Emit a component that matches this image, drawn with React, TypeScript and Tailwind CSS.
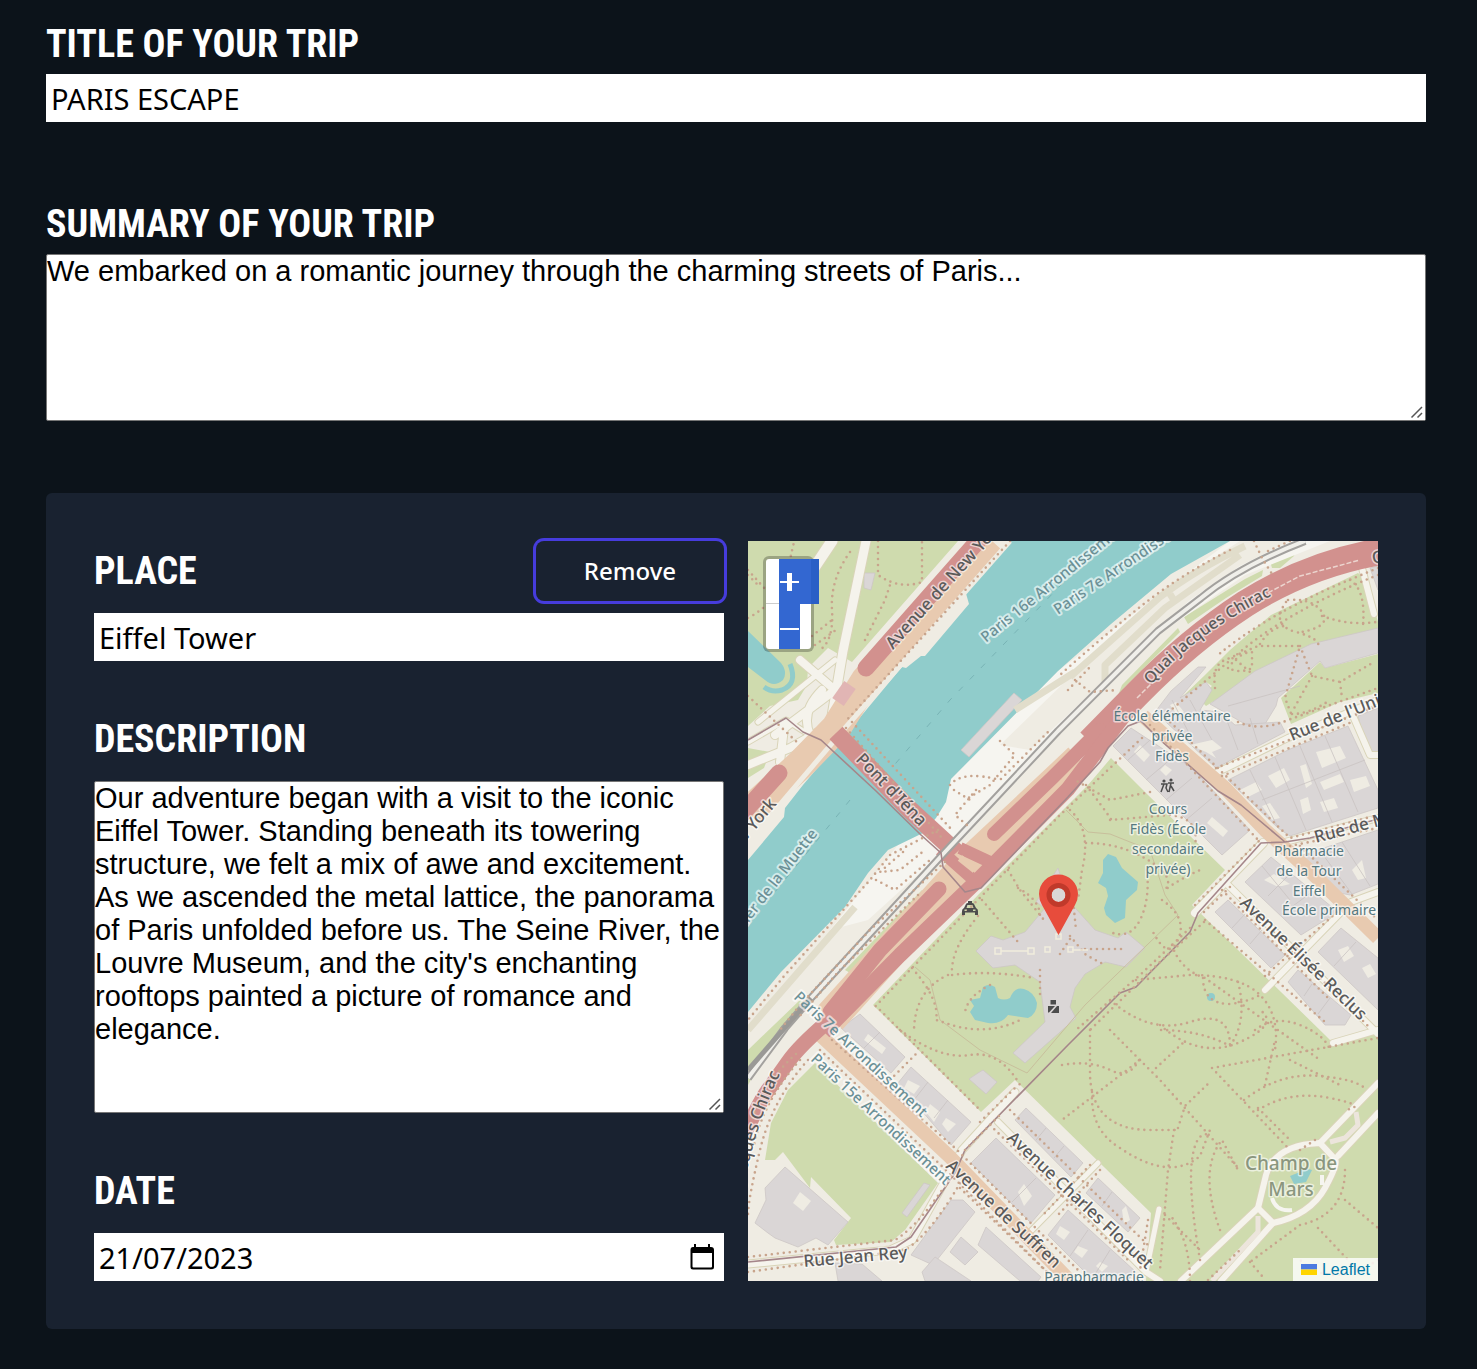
import { useId, useState } from "react";
import type { ReactNode } from "react";

const LABEL = "font-['Roboto_Condensed','Liberation_Sans_Narrow',sans-serif] text-[38px] leading-[60px] font-bold text-white uppercase";
const INPUT = "block h-12 w-full bg-white px-[5px] font-['Noto_Sans',sans-serif] text-[29px] text-black outline-none";
const AREA = "block w-full resize rounded-[2px] border border-[#767676] bg-white font-['Liberation_Sans',Arial,sans-serif] text-[29px] leading-[33px] text-black outline-none";

const greens = [
  "748,541 958,541 852,662 828,648 808,668 807,685 798,700 770,706 748,726",
  "748,748 770,752 764,768 748,778",
  "1088,785 1111,758 1148,795 1225,870 1192,905 1325,1035 1333,1043 1378,1030 1378,1281 1146,1281 1151,1213 1058,1122 1015,1080 981,1112 873,1005 978,895",
  "1181,698 1204,676 1230,650 1271,615 1358,573 1366,580 1378,622 1378,632 1311,648 1255,675 1206,706 1198,698 1212,686 1206,682",
  "1281,698 1320,662 1325,668 1378,654 1378,693 1340,702 1291,724",
  "1115,704 1122,685 1178,628 1180,632 1124,688",
  "1184,617 1245,579 1263,570 1262,576 1226,598 1188,624",
  "1270,561 1290,550 1298,544 1294,556 1280,568 1272,568",
  "845,970 922,890 926,894 852,974",
  "815,1063 938,1183 905,1230 891,1242 836,1245 834,1240 851,1218 811,1177 810,1188 783,1152 775,1160 765,1160 771,1123 788,1090",
  "748,1050 800,1000 808,1004 770,1045 748,1085",
];

const buildings = [
  "976,951 991,936 1003,940 1025,932 1045,908 1036,902 1058,868 1068,900 1095,930 1118,938 1126,932 1145,948 1126,967 1105,962 1085,974 1075,988 1070,1007 1076,1018 1025,1063 1013,1053 1045,1022 1040,982 1015,965 993,968",
  "1210,704 1255,671 1311,644 1378,628 1378,653 1325,668 1320,661 1278,698 1276,706 1265,724 1245,724",
  "1131,728 1113,746 1222,855 1250,830 1192,768",
  "1171,691 1198,667 1206,667 1180,698 1206,682 1212,690 1200,710 1220,712 1235,725 1280,722 1285,732 1216,768 1155,712",
  "1228,780 1290,749 1348,726 1378,790 1378,808 1290,836 1278,828",
  "1358,716 1378,708 1378,752 1368,756",
  "1370,568 1378,566 1378,590",
  "1300,856 1378,830 1378,884 1350,895 1340,893",
  "1245,882 1271,857 1338,912 1301,935",
  "1215,912 1228,900 1285,955 1271,968",
  "1288,982 1298,970 1351,1015 1345,1025 1325,1025",
  "1318,952 1341,928 1378,958 1378,1010",
  "841,1028 860,1014 905,1057 891,1073",
  "911,1067 971,1122 951,1145 898,1083",
  "1026,1108 1083,1163 1071,1177 1015,1120",
  "996,1138 1055,1195 1031,1223 971,1163",
  "1098,1178 1140,1218 1128,1232 1086,1193",
  "1068,1210 1136,1272 1126,1281 1094,1281 1048,1235",
  "951,1200 963,1200 975,1212 933,1265 911,1255",
  "961,1237 978,1252 965,1265 950,1252",
  "935,1257 971,1281 925,1281 922,1272",
  "986,1227 1041,1277 1038,1281 1020,1281 978,1245",
  "835,1263 862,1264 882,1281 838,1281",
  "785,1167 848,1222 828,1245 816,1238 798,1247 775,1238 768,1233 755,1223 766,1200 765,1188",
  "969,1079 978,1073 983,1070 997,1082 986,1094",
  "924,1183 930,1185 907,1217 902,1213",
  "961,750 1014,693 1022,700 969,757",
  "864,573 875,573 871,590 864,588",
];

const courtyards = [
  "800,1192 811,1201 803,1211 793,1203",
  "1170,705 1176,702 1184,712 1178,716", "1190,745 1212,740 1222,748 1212,752 1216,758 1206,752",
  "1140,745 1150,755 1144,762 1134,752", "1165,765 1172,770 1166,776 1160,770", "1212,817 1228,831 1223,837 1207,823",
  "1240,790 1256,782 1262,790 1246,798", "1268,776 1284,768 1290,780 1276,788", "1300,766 1306,764 1312,784 1306,788",
  "1316,752 1340,746 1346,758 1322,768", "1320,782 1340,774 1344,782 1324,790", "1300,800 1308,797 1311,810 1303,814",
  "1320,802 1334,798 1338,808 1324,812", "1350,780 1366,776 1370,786 1354,792", "1262,806 1270,803 1280,818 1272,820",
  "1264,880 1274,874 1290,884 1282,886 1276,886", "1352,870 1362,860 1366,878 1358,880",
  "1338,950 1348,946 1354,956 1344,962", "1362,968 1370,964 1376,974 1368,978",
  "868,1034 886,1048 882,1054 864,1040", "930,1104 940,1112 934,1122 926,1112", "908,1080 920,1086 914,1094 904,1088",
  "1024,1184 1032,1196 1024,1206 1018,1192", "946,1118 956,1124 948,1132 942,1124", "1060,1226 1070,1232 1064,1240 1056,1234",
  "1078,1246 1088,1250 1082,1258 1074,1252", "1122,1210 1126,1206 1130,1220 1124,1224", "1100,1262 1108,1266 1102,1272 1096,1266",
];

const partyWalls =
  "M1150 740L1128 760M1172 758L1146 780M1192 778L1166 800M1212 798L1186 820M1172 700L1190 735M1190 700L1212 740M1226 718L1238 750M1250 718L1258 744M1250 770L1278 828M1275 757L1306 830M1300 746L1332 822M1325 736L1358 812M1262 800L1365 760M1262 866L1290 900M1290 874L1268 896M1312 892L1282 914M1245 914L1232 928M1262 930L1250 944M1312 984L1304 996M1330 998L1318 1014M1318 848L1352 894M1342 842L1370 886M928 1082L914 1100M948 1100L934 1118M1046 1128L1036 1140M1064 1146L1054 1158M1036 1178L1012 1202M1112 1192L1102 1206M1088 1230L1070 1256M1110 1250L1094 1276M1356 942L1334 966M880 1032L864 1048M1228 706L1300 686";

const walkways = [
  "M748 618Q782 600 790 560T800 541", "M878 541V575Q900 590 922 582V541", "M850 552Q830 580 832 610T820 650", "M865 640L885 600L890 585",
  "M812 636L832 620M815 645L836 630", "M748 570L766 590M748 575L758 585", "M748 696L800 745",
  "M1230 550Q1180 575 1140 607T1060 675", "M1010 541L845 722", "M852 722L952 830", "M846 728L942 838",
  "M1378 575Q1290 610 1240 652T1165 715", "M1378 568L1330 588Q1260 620 1218 655",
  "M1268 551L1290 541M1254 541L1262 558L1272 574",
  "M1286 602Q1270 625 1296 632T1318 648M1288 600Q1312 598 1322 612T1302 632M1322 616Q1350 626 1376 622",
  "M1350 580Q1366 590 1363 625M1260 644Q1270 628 1284 626M1215 688Q1212 665 1225 660L1258 646L1300 646L1285 698L1292 716",
  "M1228 668Q1240 652 1252 652V668Q1240 674 1228 668M1236 660L1250 672",
  "M1300 646L1312 676L1340 682L1374 662M1312 676L1292 712M1340 682L1342 698M1292 714Q1310 714 1330 700",
  "M1238 722Q1260 732 1288 720L1378 688", "M1216 768L1378 706", "M1222 776L1352 722",
  "M950 785Q962 770 1000 780Q1030 750 1050 730M954 790L970 800M976 790L955 815L968 826M1000 741L1015 755L990 785L965 800",
  "M1068 690L1092 665M1075 680L1090 692L1118 690",
  "M938 830L890 855L870 880L785 975L748 1020", "M903 852L880 872L900 870L925 850M876 880L895 890L930 860",
  "M945 862L870 930L800 1005L780 1030", "M918 895L840 970L798 1018",
  "M1142 738L1060 815L910 970L872 1010",
  "M1150 792L1110 800L1075 780M1086 785Q1120 830 1110 820L1170 815Q1200 818 1195 845",
  "M1070 810Q1092 830 1082 870L1078 900M1086 843Q1120 843 1148 860T1165 890Q1178 880 1200 870",
  "M1147 870Q1150 900 1140 920T1110 932M1072 890L1076 930",
  "M1162 900Q1188 918 1178 940T1152 930",
  "M1190 928L1140 975L1076 1030", "M1204 922L1160 962L1090 1030",
  "M982 900L1018 942M1008 870L1020 890L1044 920M1018 888Q1040 900 1040 916",
  "M978 916Q950 950 952 975Q990 970 1034 978", "M948 975Q915 990 914 1030M912 968Q940 1000 936 1020L955 1026Q990 1035 1020 1020",
  "M1040 970V1000M990 985Q968 996 965 1012",
  "M1060 954L1072 936M1070 936L1086 955L1105 965M1085 949H1125",
  "M880 1010L980 1110", "M900 1030Q940 1060 970 1055T1020 1085",
  "M1136 980L1190 975Q1240 975 1260 995T1275 1050M1172 945Q1180 970 1205 978L1320 1060",
  "M1203 978Q1203 1004 1230 1004Q1248 1002 1262 994M1238 982Q1248 1020 1230 1046Q1200 1030 1160 1030",
  "M1110 1000Q1150 1035 1190 1022T1230 1046M1255 1030Q1275 1015 1300 1025T1330 1050",
  "M1205 920L1325 1022M1110 1030L1160 1080L1240 1170",
  "M1090 1030V1075Q1092 1130 1150 1130H1178M1062 1065Q1090 1060 1110 1070T1140 1058",
  "M1156 1068L1184 1042M1140 1060L1062 1120M1178 1128L1185 1106L1210 1082",
  "M1092 1092Q1090 1130 1120 1148Q1170 1182 1200 1156L1210 1130",
  "M1174 1130L1168 1170L1160 1270", "M1190 1281Q1190 1240 1170 1215M1220 1230Q1198 1170 1222 1140L1238 1170",
  "M1165 1215L1200 1250M1200 1260Q1188 1190 1192 1160T1210 1135",
  "M1212 1068L1378 1038M1212 1068L1288 1148M1160 1025Q1200 1060 1240 1042T1260 1010",
  "M1244 1100Q1280 1072 1320 1076T1366 1090M1258 1110Q1290 1090 1330 1098T1345 1110",
  "M1265 1085L1275 1040M1290 1060L1340 1085M1258 1108L1290 1140M1300 1150L1315 1140",
  "M1345 1170Q1345 1215 1300 1225L1250 1262M1345 1200L1378 1228M1318 1228L1350 1262M1378 1260Q1330 1290 1300 1260",
  "M1208 1280L1240 1250M1250 1262L1262 1276",
  "M1240 898L1370 1028", "M1222 890L1330 1000", "M1150 725L1260 842", "M1166 718L1290 838L1378 815", "M1300 846L1378 920",
  "M1290 846L1378 828M1195 905L1262 838M1204 912L1232 885M1265 976L1345 905",
  "M820 1050L948 1172L1056 1281", "M832 1040L955 1148L1078 1270",
  "M808 1060Q772 1100 760 1150T748 1215", "M800 1060Q764 1100 754 1145M796 1054Q766 1080 752 1120",
  "M748 1257L895 1240Q920 1225 952 1175", "M748 1272L905 1250Q930 1235 962 1180",
  "M980 1122L1015 1088M965 1150L1000 1115M890 1080L918 1052M1090 1165L1044 1214M1100 1170L1058 1215",
  "M1010 1110L1148 1245M990 1125L1130 1262M1148 1220L1140 1270M960 1188L1050 1275",
];

const minorRoads = [
  { d: "M866 541L843 651L830 728", w: 9 },
  { d: "M832 541L806 580", w: 11 },
  { d: "M748 765L790 748L832 724M800 660L835 690L775 735M822 690Q800 712 810 735M784 728L780 762", w: 8 },
  { d: "M748 742L786 720L805 732M835 660L758 722", w: 5 },
  { d: "M1216 773L1288 738L1378 700", w: 6 },
  { d: "M1353 716L1370 755H1378M1362 568L1374 614", w: 6 },
  { d: "M1285 842L1378 818", w: 6 },
  { d: "M1228 885L1378 1034", w: 6 },
  { d: "M1265 990L1351 902L1378 892", w: 6 },
  { d: "M1333 1043L1378 1030", w: 6 },
  { d: "M1263 843L1195 913", w: 8 },
  { d: "M1015 1092L962 1150L912 1240L890 1250L748 1264", w: 7 },
  { d: "M998 1122L1146 1272L1160 1281", w: 6 },
  { d: "M1098 1163L1030 1232", w: 5 },
  { d: "M1159 1209L1146 1272", w: 5 },
  { d: "M1181 1281L1258 1208L1273 1223L1221 1281", w: 6 },
  { d: "M1273 1223Q1310 1215 1325 1188T1334 1158L1320 1143Q1275 1145 1266 1175L1258 1208", w: 6 },
  { d: "M1320 1143L1378 1083M1338 1156L1378 1113", w: 6 },
];

const roads = [
  { d: "M992 541L866 680L836 728L800 765L748 812", w: 30, c: "#e8cab0" },
  { d: "M978 541L866 668", w: 17, c: "#d2918e", cap: true },
  { d: "M779 773L742 814", w: 17, c: "#d2918e", cap: true },
  { d: "M850 685L838 702", w: 14, c: "#e1b5b4" },
  { d: "M1010 541L845 728L748 842", w: 5, c: "#efece3" },
  { d: "M836 733L908 808L982 876", w: 18, c: "#d2918e" },
  { d: "M1143 716L1171 741L1225 788L1265 830L1311 872L1378 938", w: 14, c: "#e8cab0" },
  { d: "M818 1033L950 1157L1070 1281", w: 14, c: "#e8cab0" },
  { d: "M1080 760L965 868L830 1018", w: 34, c: "#e8cab0" },
  { d: "M1384 551Q1310 563 1245 604Q1190 640 1138 693L1090 742", w: 27, c: "#d2918e" },
  { d: "M1100 730L1052 778L994 834", w: 14, c: "#d2918e", cap: true },
  { d: "M1122 718L1068 789L978 880L900 955L824 1032", w: 15, c: "#d2918e" },
  { d: "M939 889L880 950L830 1012", w: 15, c: "#d2918e", cap: true },
  { d: "M940 850L976 882M960 848L990 862", w: 12, c: "#d2918e" },
  { d: "M832 1018Q800 1045 788 1062T768 1090T744 1135", w: 15, c: "#d2918e" },
];

const streetLabels = [
  { t: "Avenue de New York", x: 893, y: 650, a: -48 },
  { t: "New York", x: 777, y: 804, a: -50, end: true },
  { t: "Pont d'Iéna", x: 855, y: 760, a: 46 },
  { t: "Rue de l'Université", x: 1292, y: 741, a: -22 },
  { t: "Rue de Monttessuy", x: 1316, y: 843, a: -15 },
  { t: "Avenue Élisée Reclus", x: 1239, y: 904, a: 44 },
  { t: "Avenue de Suffren", x: 945, y: 1167, a: 43 },
  { t: "Avenue Charles Floquet", x: 1006, y: 1139, a: 43 },
  { t: "Rue Jean Rey", x: 804, y: 1267, a: -5 },
  { t: "Quai", x: 1373, y: 564, a: -10 },
];

const districtLabels = [
  { t: "Paris 16e Arrondissement", x: 986, y: 643, a: -39 },
  { t: "Paris 7e Arrondissement", x: 1058, y: 615, a: -34 },
  { t: "Quartier de la Muette", x: 818, y: 834, a: -52, end: true },
  { t: "Paris 7e Arrondissement", x: 793, y: 998, a: 43 },
  { t: "Paris 15e Arrondissement", x: 810, y: 1060, a: 43 },
];

const placeLabels = [
  { x: 1172, y: 721, lines: ["École élémentaire", "privée", "Fidès"] },
  { x: 1168, y: 814, lines: ["Cours", "Fidès (École", "secondaire", "privée)"] },
  { x: 1309, y: 856, lines: ["Pharmacie", "de la Tour", "Eiffel"] },
  { x: 1329, y: 915, lines: ["École primaire"] },
  { x: 1094, y: 1282, lines: ["Parapharmacie"] },
];

const RAILWAY = "M1305 541Q1240 566 1201 598L1158 631L1058 731L945 852L811 998L785 1028L748 1078";

function ParisMap() {
  return (
    <svg className="absolute inset-0 h-full w-full" viewBox="748 541 630 740" preserveAspectRatio="xMidYMid slice" role="img" aria-label="Map of the Eiffel Tower area" fontFamily="'Noto Sans', sans-serif">
      <rect x="748" y="541" width="630" height="740" fill="#efece3" />
      <g fill="#cfdbae">{greens.map((p) => <polygon key={p} points={p} />)}</g>

      <polygon fill="#f6f5f0" points="1230,541 1330,541 1245,575 1158,635 1058,735 945,850 868,920 830,930 950,780 1058,671" />
      <polygon fill="#efece3" points="1240,541 1290,541 1240,566 1190,600 1060,722 1030,750 1000,745 1075,672 1160,592" />
      <g fill="#90cccb">
        <path d="M1008 541L965 590L969 604L925 656H921L906 668L902 667L852 727L803 785L785 808L784 817L748 860V1012L781 972L845 907L868 873L888 850L923 833L936 818L946 802L951 779L1058 671L1111 624L1171 574L1230 541Z" />
        <path d="M748 631L781 663Q788 672 783 680Q774 688 765 680L748 667Z" />
        <path d="M1108 854L1116 857L1122 868L1138 882L1137 890L1126 900L1125 918L1115 923L1106 915L1104 908L1108 896L1106 888L1098 883L1103 873V860Z" />
        <path d="M983 987Q989 983 995 987L998 998Q1004 1001 1010 998Q1015 986 1024 989Q1034 992 1037 1003Q1037 1014 1028 1018L1008 1015Q1001 1025 988 1023L975 1020L970 1012L974 1006L970 1000L980 998Z" />
        <circle cx="1211" cy="997" r="4" />
      </g>
      <path d="M790 664Q798 684 782 690Q772 693 764 687" fill="none" stroke="#90cccb" strokeWidth="5" />
      <path d="M1085 560L950 700L890 770M850 800L748 925" stroke="#78b3b5" strokeWidth="1" strokeDasharray="6 10" fill="none" />

      <g fill="#dad6d6" stroke="#cdc7c5" strokeWidth="0.8">{buildings.map((p) => <polygon key={p} points={p} />)}</g>
      <g fill="#efece3">{courtyards.map((p) => <polygon key={p} points={p} />)}</g>
      <path d={partyWalls} stroke="#c9c3c1" strokeWidth="0.8" />

      <g fill="none" strokeLinejoin="round">
        <path d="M1245 546Q1195 570 1160 597L1070 677M1170 594L1175 602M1240 555L1165 608L1105 665V682M855 907L748 1030M1015 710L1075 672" stroke="#e1ddcb" strokeWidth="7" />
        <g stroke="#d9d4b8" strokeLinecap="round">{minorRoads.map((r) => <path key={r.d} d={r.d} strokeWidth={r.w + 2} />)}</g>
        <g stroke="#f5f3ec" strokeLinecap="round">{minorRoads.map((r) => <path key={r.d} d={r.d} strokeWidth={r.w} />)}</g>
        <path d="M1212 1281L1258 1232V1216M1330 1142L1345 1138L1358 1125L1356 1112" stroke="#ece5dc" strokeWidth="5" />
        {roads.map((r) => <path key={r.d} d={r.d} stroke={r.c} strokeWidth={r.w} strokeLinecap={r.cap ? "round" : "butt"} />)}
        <path d="M960 858L975 870" stroke="#e8cab0" strokeWidth="7" />
        <path d="M1137 698L1160 675M1262 596L1300 576L1360 560" stroke="#ecd5cf" strokeWidth="1.5" strokeDasharray="5 2" />
        <path d={RAILWAY} stroke="#a3a19e" strokeWidth="8" />
        <path d={RAILWAY} stroke="#f0efea" strokeWidth="4" />
        <path d="M811 998L748 1070" stroke="#9a9996" strokeWidth="5" />
        <path d="M748 740L786 718L803 732L821 740L876 791L921 835L941 853L943 867L965 892L981 888L1068 797L1100 762L1108 748L1128 726L1141 721L1158 738L1218 791L1241 805L1285 842L1261 843L1198 913L1190 932L1136 987L1120 993L1068 1045L965 1150L955 1173L911 1237L896 1247L748 1262M1285 842L1310 838L1378 819" stroke="#a5868a" strokeWidth="1.6" />
        <path d="M1066 810L1088 832L1110 834L1150 850L1165 895L1178 915L1085 1005L1027 1073L980 1050L940 1020L930 980L915 967" stroke="#c8bf9c" strokeWidth="1" />
        <g stroke="#c8a48c" strokeWidth="2.6" strokeLinecap="round" strokeDasharray="0 6">{walkways.map((d) => <path key={d} d={d} />)}</g>
      </g>

      <g fill="none" stroke="#f1eddd" strokeWidth="1.5">
        <path d="M1001 951H1028M1072 950H1088" />
        <rect x="995" y="948" width="6" height="6" /><rect x="1028" y="948" width="6" height="6" />
        <rect x="1045" y="947" width="5" height="5" /><rect x="1068" y="947" width="5" height="5" /><rect x="1056" y="934" width="5" height="5" />
      </g>
      <path d="M1290 1176L1300 1172L1305 1168L1312 1170L1306 1182L1294 1184Z" fill="#90cccb" />
      <path d="M1272 1198Q1276 1212 1292 1210M1322 1175V1185" stroke="#f6f5f0" strokeWidth="4" fill="none" />

      <g fill="#4c4c4c">
        <path fillRule="evenodd" d="M964 908L966 904Q966.500 903 968 903V901H972V903Q973.500 903 974 904L976 908Q978 909 978 911V915H975V912.500H965V915H962V911Q962 909 964 908ZM967.500 905L966.500 908H973.500L972.500 905ZM964.500 909.500V911H967V909.500ZM973 909.500V911H975.500V909.500Z" />
        <path d="M1050.500 1000H1056V1004.500H1050.500ZM1048 1006H1055L1049 1012.500H1048ZM1057 1006H1059V1013H1051Z" />
        <circle cx="1164" cy="781" r="1.6" /><circle cx="1171" cy="780" r="1.6" />
        <path d="M1161 784H1167L1166 788L1168 792M1164 784L1161 792M1168 783H1174M1171 783L1169 792M1171 786L1174 791" stroke="#4c4c4c" strokeWidth="1.5" fill="none" />
      </g>

      <g paintOrder="stroke" strokeLinejoin="round" stroke="#ffffff" strokeOpacity="0.6" fontWeight="500">
        <g fontSize="17" fill="#5a5a5a" strokeWidth="3">
          {streetLabels.map((l) => (
            <text key={l.t} transform={`translate(${l.x} ${l.y}) rotate(${l.a})`} textAnchor={l.end ? "end" : "start"}>{l.t}</text>
          ))}
          <path id="quai-north" d="M1151 685Q1195 632 1285 589" fill="none" stroke="none" />
          <text fontSize="16"><textPath href="#quai-north">Quai Jacques Chirac</textPath></text>
          <path id="quai-south" d="M736 1232Q748 1140 780 1074" fill="none" stroke="none" />
          <text textAnchor="end"><textPath href="#quai-south" startOffset="100%">Quai Jacques Chirac</textPath></text>
        </g>
        <g fontSize="15" fill="#6b9096" strokeWidth="4">
          {districtLabels.map((l) => (
            <text key={`${l.t}${l.x}`} transform={`translate(${l.x} ${l.y}) rotate(${l.a})`} textAnchor={l.end ? "end" : "start"}>{l.t}</text>
          ))}
        </g>
        <g fontSize="14" fontWeight="400" fill="#567980" strokeWidth="3" textAnchor="middle">
          {placeLabels.map((p) => p.lines.map((line, i) => <text key={line} x={p.x} y={p.y + i * 20}>{line}</text>))}
        </g>
        <g fontSize="19" fill="#8a967e" strokeWidth="3" textAnchor="middle">
          <text x="1291" y="1170">Champ de</text>
          <text x="1291" y="1196">Mars</text>
        </g>
      </g>

      <path fillRule="evenodd" fill="#e74c3c" d="M1058.500 935L1042 905Q1039 900 1039 894A19.500 19.500 0 0 1 1078 894Q1078 900 1075 905ZM1058.500 888A7 7 0 1 0 1058.500 902A7 7 0 1 0 1058.500 888Z" />
      <circle cx="1058.500" cy="895" r="9.500" fill="none" stroke="#c0392b" strokeWidth="5" />
    </svg>
  );
}

function ZoomControl() {
  return (
    <div className="absolute top-[15px] left-[15px] flex w-[51px] flex-col rounded-md border-[3px] border-black/25 bg-white bg-clip-padding">
      <button type="button" aria-label="Zoom in" className="relative h-[45px] rounded-t-[3px] border-b border-[#ccc]">
        <span className="absolute top-0 -bottom-px left-[13px] flex w-10 items-center bg-[#3367d1]">
          <svg className="ml-px h-5 w-5" viewBox="0 0 20 20" fill="#fff"><path d="M0 9H19V11H0ZM7 1H12V19H7Z" /></svg>
          <span className="absolute inset-y-0 right-0 w-2 bg-[#2a5fc6]" />
        </span>
      </button>
      <button type="button" aria-label="Zoom out" className="relative h-[45px]">
        <span className="absolute inset-y-0 left-[13px] flex w-[21px] items-center bg-[#3367d1]">
          <svg className="ml-px h-5 w-5" viewBox="0 0 20 20" fill="#fff"><path d="M0 11H19V13H0Z" /></svg>
        </span>
      </button>
    </div>
  );
}

function Field({ label, gap = "gap-3", action, children }: { label: string; gap?: string; action?: ReactNode; children: (id: string) => ReactNode }) {
  const id = useId();
  return (
    <div className={`flex flex-col ${gap}`}>
      <div className="flex items-center justify-between">
        <label htmlFor={id} className={LABEL}>{label}</label>
        {action}
      </div>
      {children(id)}
    </div>
  );
}

function TextArea({ id, rows, value, onChange }: { id: string; rows: number; value: string; onChange: (value: string) => void }) {
  return (
    <div className="relative w-full">
      <textarea id={id} rows={rows} className={AREA} value={value} onChange={(e) => onChange(e.target.value)} />
      <svg className="pointer-events-none absolute right-px bottom-px h-4 w-4 bg-white" viewBox="0 0 16 16" fill="none" stroke="#555" strokeWidth="1.5">
        <path d="M2.500 13.500L13 3M8.500 13.500L13 9" />
      </svg>
    </div>
  );
}

export default function App() {
  const [title, setTitle] = useState("PARIS ESCAPE");
  const [summary, setSummary] = useState("We embarked on a romantic journey through the charming streets of Paris...");
  const [place, setPlace] = useState("Eiffel Tower");
  const [description, setDescription] = useState(
    "Our adventure began with a visit to the iconic Eiffel Tower. Standing beneath its towering structure, we felt a mix of awe and excitement. As we ascended the metal lattice, the panorama of Paris unfolded before us. The Seine River, the Louvre Museum, and the city's enchanting rooftops painted a picture of romance and elegance.",
  );
  const [date, setDate] = useState("21/07/2023");

  return (
    <main className="min-h-screen bg-[#0c131a] pt-3.5 pr-[51px] pb-10 pl-[46px]">
      <form className="flex flex-col gap-[72px]" onSubmit={(e) => e.preventDefault()}>
        <Field label="Title of your trip" gap="gap-0">
          {(id) => <input id={id} className={INPUT} value={title} onChange={(e) => setTitle(e.target.value)} />}
        </Field>
        <Field label="Summary of your trip" gap="gap-0">
          {(id) => <TextArea id={id} rows={5} value={summary} onChange={setSummary} />}
        </Field>

        <section className="grid grid-cols-2 gap-6 rounded-md bg-[#192230] p-12">
          <div className="flex flex-col gap-12">
            <Field
              label="Place"
              action={
                <button type="button" className="h-[60px] w-[188px] rounded-lg font-['Noto_Sans',sans-serif] text-[24px] font-medium text-white ring-3 ring-[#463cdc]">
                  Remove
                </button>
              }
            >
              {(id) => <input id={id} className={INPUT} value={place} onChange={(e) => setPlace(e.target.value)} />}
            </Field>
            <Field label="Description">
              {(id) => <TextArea id={id} rows={10} value={description} onChange={setDescription} />}
            </Field>
            <Field label="Date">
              {(id) => (
                <div className="relative">
                  <input id={id} inputMode="numeric" className={INPUT} value={date} onChange={(e) => setDate(e.target.value)} />
                  <button type="button" aria-label="Open calendar" className="absolute inset-y-0 right-2 flex w-7 items-center justify-center">
                    <svg className="h-7 w-7" viewBox="0 0 28 28">
                      <path fillRule="evenodd" d="M6 1H8V4H20V1H22V4H23Q26 4 26 7V24Q26 26.500 23.500 26.500H5Q2.500 26.500 2.500 24V7Q2.500 4 5 4H6ZM4.500 10V23.500Q4.500 24.500 5.500 24.500H23Q24 24.500 24 23.500V10Z" />
                    </svg>
                  </button>
                </div>
              )}
            </Field>
          </div>

          <div className="relative overflow-hidden">
            <ParisMap />
            <ZoomControl />
            <a href="https://leafletjs.com" className="absolute right-0 bottom-0 flex h-[23px] items-center gap-[5px] bg-white/80 px-2 font-['Liberation_Sans',Arial,sans-serif] text-base text-[#0078a8]">
              <svg className="h-[11px] w-4" viewBox="0 0 16 11"><path fill="#4c7be1" d="M0 0H16V5.500H0Z" /><path fill="#ffd500" d="M0 5.500H16V11H0Z" /></svg>
              Leaflet
            </a>
          </div>
        </section>
      </form>
    </main>
  );
}
